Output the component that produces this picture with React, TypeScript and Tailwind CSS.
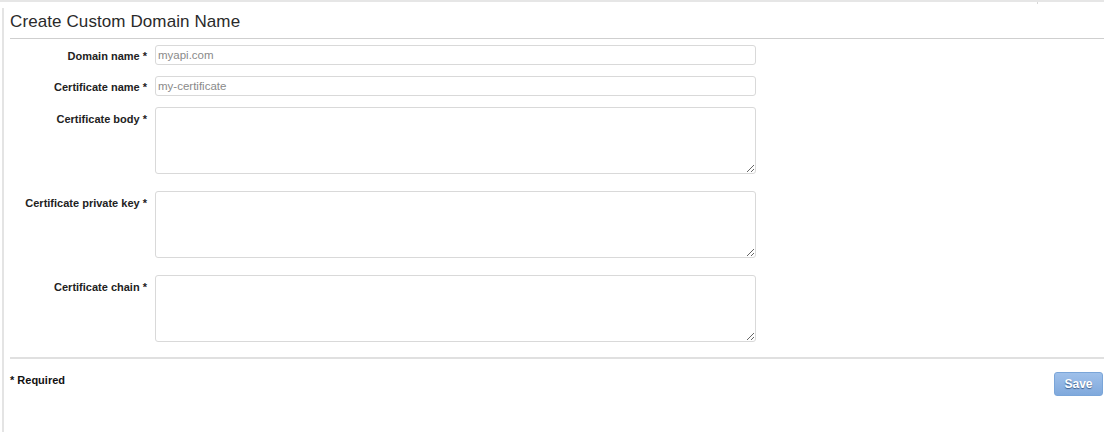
import React from "react";

const font = { fontFamily: '"Liberation Sans", Arial, sans-serif' };

function Row({ label, mb }: { label: string; mb: string }) {
  return (
    <div className={`flex items-start ${mb}`}>
      <label className="w-[138px] shrink-0 pr-[1px] pt-[6px] text-right text-[11px] font-bold leading-[13px] text-[#222]">
        {label} *
      </label>
      <textarea className="ml-[7px] h-[67px] w-[601px] resize-y rounded-[3px] border border-[#d9d9d9] bg-white outline-none" />
    </div>
  );
}

export default function App() {
  return (
    <div style={font} className="relative h-[432px] w-[1104px] overflow-hidden bg-white border-t-[2px] border-[#e6e6e6]">
      <div className="absolute left-[1037px] top-[-2px] h-[4px] w-[1px] bg-[#d8d8d8]" />
      <div className="ml-[2px] mt-[6px] h-[424px] border-l-[2px] border-[#e4e4e4] pl-[6px]">
        <h1 className="pt-[2px] text-[17px] leading-[24px] tracking-[0.1px] text-[#2a2a2a]">Create Custom Domain Name</h1>
        <div className="mt-[4px] h-[1px] bg-[#cfcfcf]" />
        <div className="mt-[6px]">
          <div className="mb-[11px] flex items-start">
            <label className="w-[138px] shrink-0 pr-[1px] pt-[5px] text-right text-[11px] font-bold leading-[13px] text-[#222]">Domain name *</label>
            <input readOnly placeholder="myapi.com" className="ml-[7px] h-[20px] w-[601px] rounded-[3px] border border-[#d9d9d9] px-[2px] text-[11.5px] text-[#333] outline-none placeholder:text-[#8a8a8a]" />
          </div>
          <div className="mb-[11px] flex items-start">
            <label className="w-[138px] shrink-0 pr-[1px] pt-[5px] text-right text-[11px] font-bold leading-[13px] text-[#222]">Certificate name *</label>
            <input readOnly placeholder="my-certificate" className="ml-[7px] h-[20px] w-[601px] rounded-[3px] border border-[#d9d9d9] px-[2px] text-[11.5px] text-[#333] outline-none placeholder:text-[#8a8a8a]" />
          </div>
          <Row label="Certificate body" mb="mb-[17px]" />
          <Row label="Certificate private key" mb="mb-[17px]" />
          <Row label="Certificate chain" mb="mb-[0px]" />
        </div>
        <div className="mt-[15px] h-[2px] bg-[#e0e0e0]" />
        <div className="mt-[13px] flex items-start justify-between">
          <div className="pt-[2px] text-[11px] font-bold leading-[13px] text-[#111]">* Required</div>
          <button
            className="mr-[1px] h-[24px] w-[49px] rounded-[3px] border border-[#7aa5d8] bg-gradient-to-b from-[#9fc0ea] to-[#80a9dc] text-[12px] font-bold text-white"
            style={{ textShadow: "0 1px 1px rgba(30,60,100,0.7)" }}
          >
            Save
          </button>
        </div>
      </div>
    </div>
  );
}
